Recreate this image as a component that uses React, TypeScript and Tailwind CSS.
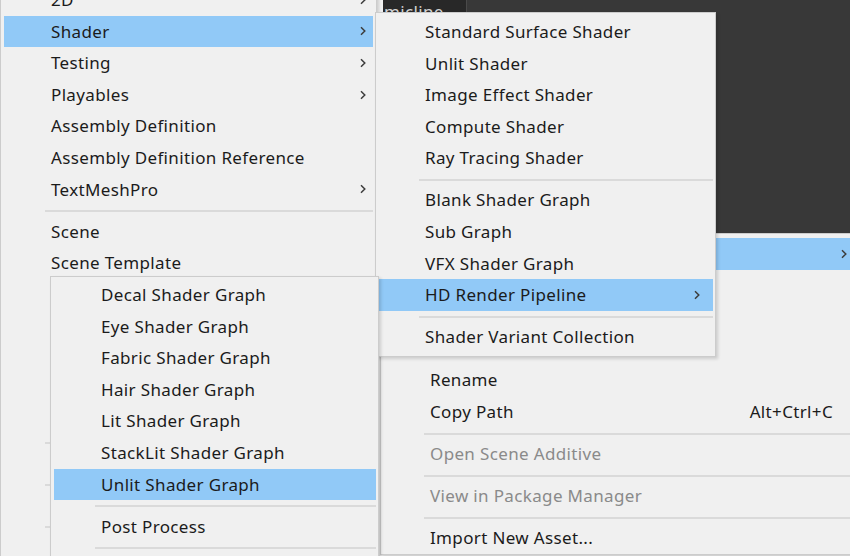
import React from 'react';

type Row =
  | { label: string; sub?: boolean; active?: boolean; disabled?: boolean; shortcut?: string }
  | 'sep';

const Chevron: React.FC = () => (
  <svg width="6" height="10" viewBox="0 0 6 10" className="shrink-0">
    <path d="M1 1.2 L4.8 5 L1 8.8" fill="none" stroke="#3c3c3c" strokeWidth="1.5" />
  </svg>
);

interface MenuProps {
  rows: Row[];
  className: string;
  rowPr: string;
}

// one popup menu, windows 10 style
const Menu: React.FC<MenuProps> = ({ rows, className, rowPr }) => (
  <div
    className={`absolute flex flex-col border border-[#cccccc] bg-[#f0f0f0] shadow-[2px_2px_3px_rgba(0,0,0,0.15)] ${className}`}
  >
    {rows.map((r, i) =>
      r === 'sep' ? (
        <div key={i} className="h-[10.4px] shrink-0 pt-[5px]">
          <div className="ml-[41px] h-[2px] bg-[#dadada]" />
        </div>
      ) : (
        <div
          key={i}
          className={`flex h-[31.6px] shrink-0 items-center pl-[47px] ${rowPr} ${r.active ? 'bg-[#91c9f7]' : ''} ${
            r.disabled ? 'text-[#8a8a8a]' : 'text-[#1b1b1b]'
          }`}
        >
          <span className="flex-1 whitespace-nowrap">{r.label}</span>
          {r.shortcut && <span className="mr-[14px] whitespace-nowrap">{r.shortcut}</span>}
          {r.sub && <Chevron />}
        </div>
      )
    )}
  </div>
);

// rows hidden under the submenus are kept as blank rows
const assetsMenu: Row[] = [
  { label: '', sub: true, active: true },
  { label: '' },
  { label: '' },
  { label: '' },
  { label: 'Rename' },
  { label: 'Copy Path', shortcut: 'Alt+Ctrl+C' },
  'sep',
  { label: 'Open Scene Additive', disabled: true },
  'sep',
  { label: 'View in Package Manager', disabled: true },
  'sep',
  { label: 'Import New Asset...' },
];

const createMenu: Row[] = [
  { label: '2D', sub: true },
  { label: 'Shader', sub: true, active: true },
  { label: 'Testing', sub: true },
  { label: 'Playables', sub: true },
  { label: 'Assembly Definition' },
  { label: 'Assembly Definition Reference' },
  { label: 'TextMeshPro', sub: true },
  'sep',
  { label: 'Scene' },
  { label: 'Scene Template' },
  { label: '' },
  { label: '' },
  { label: '' },
  { label: '' },
  { label: '' },
  'sep',
  { label: '' },
  'sep',
  { label: '' },
  'sep',
  { label: '' },
];

const shaderMenu: Row[] = [
  { label: 'Standard Surface Shader' },
  { label: 'Unlit Shader' },
  { label: 'Image Effect Shader' },
  { label: 'Compute Shader' },
  { label: 'Ray Tracing Shader' },
  'sep',
  { label: 'Blank Shader Graph' },
  { label: 'Sub Graph' },
  { label: 'VFX Shader Graph' },
  { label: 'HD Render Pipeline', sub: true, active: true },
  'sep',
  { label: 'Shader Variant Collection' },
];

const hdMenu: Row[] = [
  { label: 'Decal Shader Graph' },
  { label: 'Eye Shader Graph' },
  { label: 'Fabric Shader Graph' },
  { label: 'Hair Shader Graph' },
  { label: 'Lit Shader Graph' },
  { label: 'StackLit Shader Graph' },
  { label: 'Unlit Shader Graph', active: true },
  'sep',
  { label: 'Post Process' },
  'sep',
  { label: '' },
];

export default function App() {
  return (
    <div className="relative h-[556px] w-[850px] overflow-hidden bg-[#f0f0f0] font-['Noto_Sans',sans-serif] text-[17px] tracking-[0.35px]">
      {/* editor behind the menus */}
      <div className="absolute left-[383px] right-0 top-0 h-[233px] bg-[#383838]">
        <div className="h-[24px] w-[84px] border-r border-[#4a4a4a] bg-[#282828] pl-[1px] leading-[24px] text-[#d2d2d2]">
          micline
        </div>
      </div>

      <Menu rows={assetsMenu} className="left-[380px] top-[233px] w-[480px] px-[2px] pt-[4px]" rowPr="pr-[10px]" />
      <Menu rows={createMenu} className="left-0 top-[-20px] w-[377px] px-[3px] pt-[3px]" rowPr="pr-[7px]" />
      <Menu rows={shaderMenu} className="left-[375px] top-[12px] w-[341px] px-[2px] py-[3px]" rowPr="pr-[13px]" />
      <Menu rows={hdMenu} className="left-[50px] top-[276px] w-[329px] pl-[3px] pr-[2px] pt-[2px]" rowPr="pr-[13px]" />
    </div>
  );
}
